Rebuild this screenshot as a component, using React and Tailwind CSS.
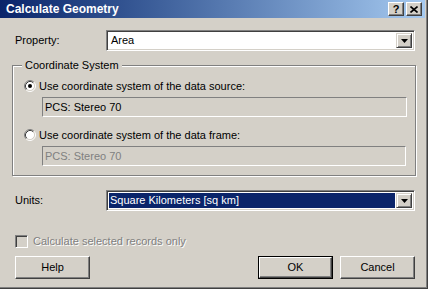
import React from "react";

const font = { fontFamily: '"Liberation Sans", Arial, sans-serif' };

function Radio({ checked }) {
  return (
    <svg width="12" height="12" viewBox="0 0 12 12" className="shrink-0">
      <circle cx="6" cy="6" r="4.5" fill="#ffffff" />
      <path d="M2.11 9.89 A5.5 5.5 0 0 1 9.89 2.11" fill="none" stroke="#808080" strokeWidth="1" />
      <path d="M9.89 2.11 A5.5 5.5 0 0 1 2.11 9.89" fill="none" stroke="#ffffff" strokeWidth="1" />
      <path d="M2.82 9.18 A4.5 4.5 0 0 1 9.18 2.82" fill="none" stroke="#404040" strokeWidth="1" />
      <path d="M9.18 2.82 A4.5 4.5 0 0 1 2.82 9.18" fill="none" stroke="#d4d0c8" strokeWidth="1" />
      {checked && <circle cx="6" cy="6" r="2" fill="#000000" />}
    </svg>
  );
}

function DropButton() {
  return (
    <div className="w-[16px] h-full shrink-0 bg-[#d4d0c8] border border-t-[#d4d0c8] border-l-[#d4d0c8] border-r-[#404040] border-b-[#404040] shadow-[inset_1px_1px_0_#ffffff,inset_-1px_-1px_0_#808080] flex items-center justify-center">
      <svg width="7" height="4" viewBox="0 0 7 4">
        <polygon points="0,0 7,0 3.5,4" fill="#000000" />
      </svg>
    </div>
  );
}

function Combo({ text, selected }) {
  return (
    <div className="w-[309px] h-[21px] flex border border-t-[#808080] border-l-[#808080] border-r-white border-b-white shadow-[inset_1px_1px_0_#404040,inset_-1px_-1px_0_#d4d0c8] p-[2px] bg-white">
      <div className="flex-1 min-w-0 flex items-center pr-[1px]">
        {selected ? (
          <div className="h-full w-full bg-[#0a246a] text-white flex items-center pl-[1px] leading-none">
            {text}
          </div>
        ) : (
          <div className="pl-[2px] text-black leading-none">{text}</div>
        )}
      </div>
      <DropButton />
    </div>
  );
}

function Field({ text, disabled, width }) {
  return (
    <div
      className={
        "h-[20px] border border-t-[#808080] border-l-[#808080] border-r-white border-b-white flex items-center pl-[2px] leading-none " +
        (disabled ? "text-[#808080]" : "text-black")
      }
      style={{ width }}
    >
      {text}
    </div>
  );
}

function Button({ children, isDefault }) {
  return (
    <div
      className={
        "w-[75px] h-[23px] " + (isDefault ? "border border-black" : "")
      }
    >
      <div className="w-full h-full bg-[#d4d0c8] border border-t-white border-l-white border-r-[#404040] border-b-[#404040] shadow-[inset_-1px_-1px_0_#808080] flex items-center justify-center text-black leading-none">
        {children}
      </div>
    </div>
  );
}

function TitleButton({ children }) {
  return (
    <div className="w-[16px] h-[14px] bg-[#d4d0c8] border border-t-white border-l-white border-r-[#404040] border-b-[#404040] shadow-[inset_-1px_-1px_0_#808080] flex items-center justify-center">
      {children}
    </div>
  );
}

export default function App() {
  return (
    <div className="w-[429px] h-[294px] bg-white overflow-hidden text-[11px]" style={font}>
      <div className="w-[428px] h-[289px] bg-[#d4d0c8] border-r border-b border-[#404040] shadow-[inset_-1px_-1px_0_#808080] flex flex-col">
        {/* Title bar */}
        <div className="h-[18px] mr-[2px] bg-gradient-to-r from-[#0a246a] to-[#a6caf0] flex items-center justify-between pl-[6px] pr-[3px]">
          <span className="text-white font-bold text-[12px] leading-none">Calculate Geometry</span>
          <div className="flex gap-[2px]">
            <TitleButton>
              <span className="font-bold text-[11px] leading-none text-black">?</span>
            </TitleButton>
            <TitleButton>
              <svg width="8" height="7" viewBox="0 0 8 7">
                <path d="M0.5 0.5 L7.5 6.5 M7.5 0.5 L0.5 6.5" stroke="#000000" strokeWidth="1.6" />
              </svg>
            </TitleButton>
          </div>
        </div>

        {/* Property */}
        <div className="mt-[12px] flex items-center pl-[15px]">
          <div className="w-[91px] text-black">Property:</div>
          <Combo text="Area" />
        </div>

        {/* Coordinate System group */}
        <div className="mt-[14px] ml-[12px] w-[404px] h-[111px] relative border border-[#808080] shadow-[inset_1px_1px_0_#ffffff,1px_1px_0_#ffffff] flex flex-col pt-[13px]">
          <span className="absolute -top-[7px] left-[9px] px-[3px] bg-[#d4d0c8] text-black leading-[13px]">
            Coordinate System
          </span>
          <div className="flex items-center h-[14px] pl-[11px] gap-[3px] text-black">
            <Radio checked />
            <span className="leading-none">Use coordinate system of the data source:</span>
          </div>
          <div className="ml-[29px] mt-[4px]">
            <Field text="PCS: Stereo 70" width="365px" />
          </div>
          <div className="flex items-center h-[14px] pl-[11px] gap-[3px] text-black mt-[11px]">
            <Radio />
            <span className="leading-none">Use coordinate system of the data frame:</span>
          </div>
          <div className="ml-[29px] mt-[4px]">
            <Field text="PCS: Stereo 70" width="364px" disabled />
          </div>
        </div>

        {/* Units */}
        <div className="mt-[14px] flex items-center pl-[15px]">
          <div className="w-[91px] text-black">Units:</div>
          <Combo text="Square Kilometers [sq km]" selected />
        </div>

        {/* Checkbox */}
        <div className="mt-[24px] ml-[15px] flex items-center gap-[5px]">
          <div className="w-[13px] h-[13px] border border-t-[#808080] border-l-[#808080] border-r-white border-b-white shadow-[inset_1px_1px_0_#404040,inset_-1px_-1px_0_#d4d0c8] bg-[#d4d0c8]" />
          <span className="text-[#808080] leading-none [text-shadow:1px_1px_0_#ffffff]">
            Calculate selected records only
          </span>
        </div>

        {/* Buttons */}
        <div className="mt-[8px] flex items-center pl-[15px] pr-[12px]">
          <Button>Help</Button>
          <div className="flex-1" />
          <Button isDefault>OK</Button>
          <div className="w-[7px]" />
          <Button>Cancel</Button>
        </div>
      </div>
    </div>
  );
}
